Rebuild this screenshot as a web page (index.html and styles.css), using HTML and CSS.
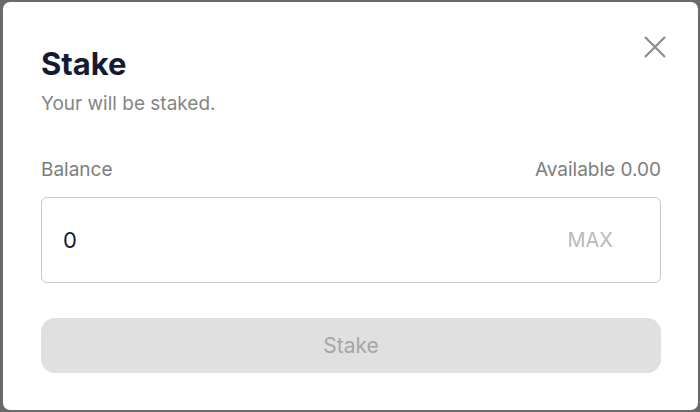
FILE: index.html
```html
<!DOCTYPE html>
<html lang="en">
<head>
<meta charset="utf-8">
<title>Stake</title>
<link rel="stylesheet" href="styles.css">
</head>
<body>
<div class="modal">
  <button class="close" aria-label="Close">
    <svg width="22" height="22" viewBox="0 0 22 22"><path d="M1 1 L21 21 M21 1 L1 21" stroke="#8c8c8c" stroke-width="2.2" fill="none"/></svg>
  </button>
  <h1 class="title">Stake</h1>
  <p class="subtitle">Your will be staked.</p>
  <div class="balance-row">
    <span>Balance</span>
    <span>Available 0.00</span>
  </div>
  <div class="field">
    <span class="value">0</span>
    <span class="max">MAX</span>
  </div>
  <button class="stake-btn">Stake</button>
</div>
</body>
</html>
```
FILE: styles.css
```css
html, body {
  margin: 0;
  padding: 0;
}
body {
  background: #6a6a6a;
  width: 700px;
  height: 412px;
  overflow: hidden;
  font-family: Inter, "Noto Sans", sans-serif;
}
.modal {
  position: relative;
  margin: 2px 2px 2px 3px;
  height: 408px;
  box-sizing: border-box;
  background: #fff;
  border-radius: 7px;
  padding: 44px 37px 0 38px;
}
.close {
  position: absolute;
  top: 34px;
  right: 32px;
  width: 22px;
  height: 22px;
  padding: 0;
  border: 0;
  background: none;
}
.close svg { display: block; }
.title {
  margin: 0;
  font-size: 31px;
  line-height: 36px;
  font-weight: 700;
  color: #141a33;
}
.subtitle {
  margin: 10px 0 0;
  font-size: 19px;
  line-height: 24px;
  color: #858585;
}
.balance-row {
  margin-top: 42px;
  display: flex;
  justify-content: space-between;
  font-size: 19px;
  line-height: 24px;
  color: #7d7d7d;
}
.field {
  margin-top: 15px;
  height: 86px;
  box-sizing: border-box;
  border: 1px solid #c9c9c9;
  border-radius: 6px;
  display: flex;
  align-items: center;
  justify-content: space-between;
  padding: 0 47px 0 21px;
}
.value {
  font-size: 22px;
  color: #141a33;
}
.max {
  font-size: 20px;
  color: #b9b9b9;
}
.stake-btn {
  display: block;
  width: 100%;
  margin-top: 35px;
  height: 55px;
  border: 0;
  border-radius: 14px;
  background: #e0e0e0;
  color: #a6a6a6;
  font-family: Inter, "Noto Sans", sans-serif;
  font-size: 21px;
}
```
